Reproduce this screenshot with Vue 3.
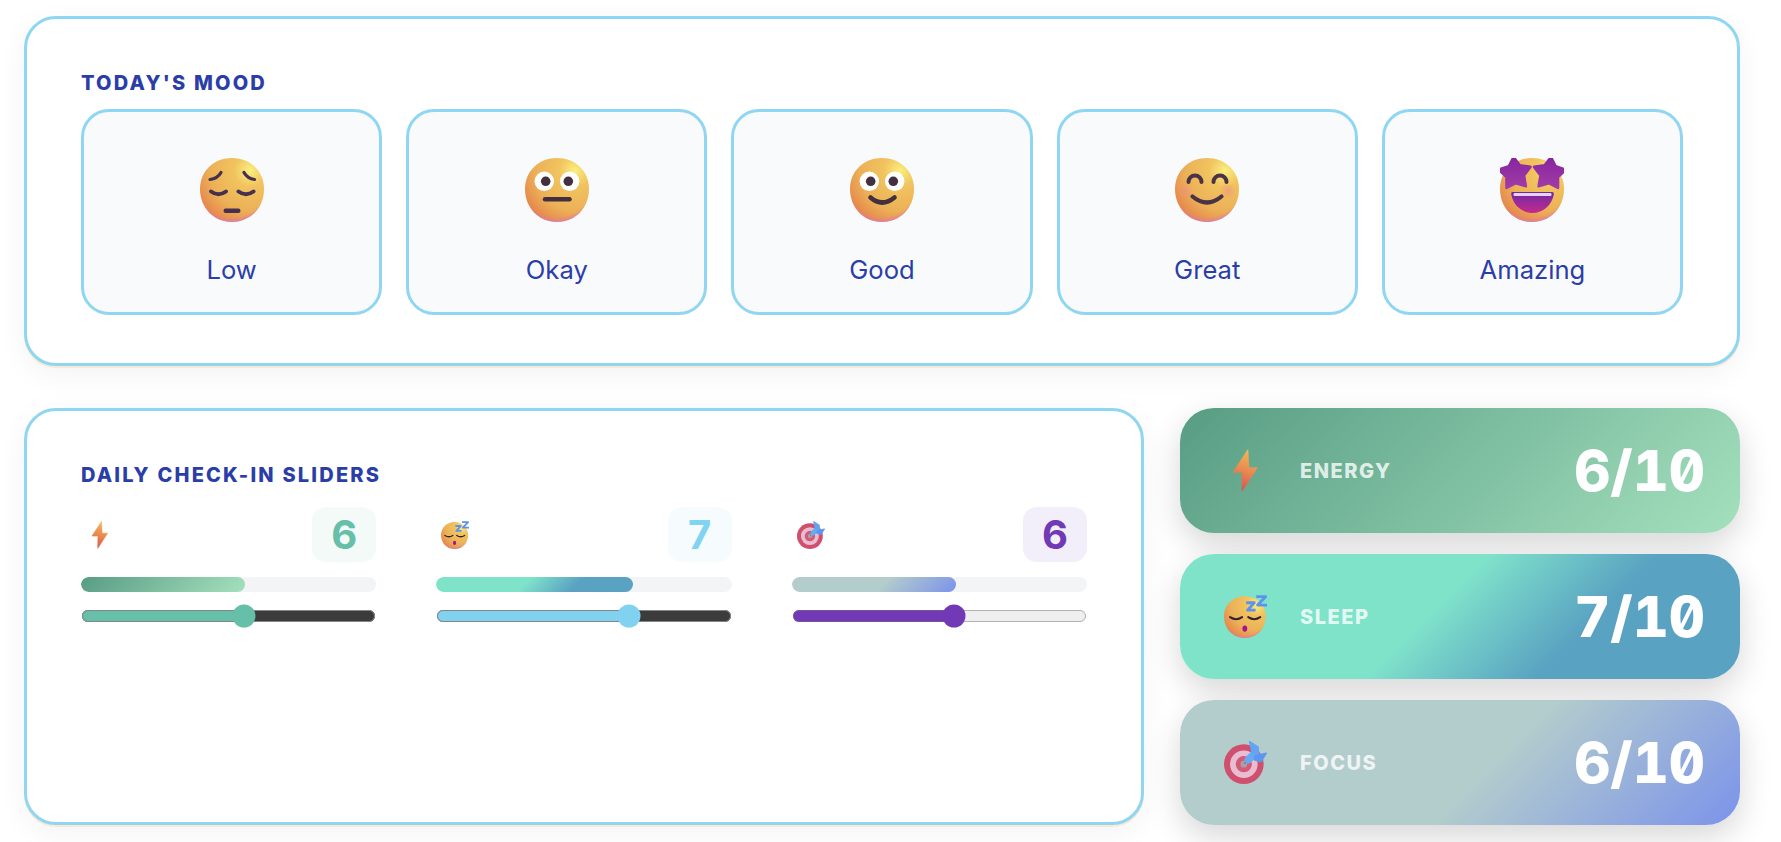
<script setup>
import { reactive } from 'vue'

const moods = [
  { label: 'Low', icon: '#e-low' },
  { label: 'Okay', icon: '#e-okay' },
  { label: 'Good', icon: '#e-good' },
  { label: 'Great', icon: '#e-great' },
  { label: 'Amazing', icon: '#e-amazing' }
]

const metrics = reactive([
  { key: 'energy', label: 'ENERGY', icon: '#e-bolt', value: 6 },
  { key: 'sleep', label: 'SLEEP', icon: '#e-sleep', value: 7 },
  { key: 'focus', label: 'FOCUS', icon: '#e-target', value: 6 }
])

const pct = (v) => ((v - 1) / 9) * 100 + '%'
</script>

<template>
  <main class="page">
    <svg class="defs" aria-hidden="true">
      <defs>
        <radialGradient id="g-face" cx="0.78" cy="0.2" r="0.95">
          <stop offset="0" stop-color="#f9ef7f" />
          <stop offset="0.26" stop-color="#f1c45f" />
          <stop offset="0.66" stop-color="#ecb057" />
          <stop offset="1" stop-color="#e47f4a" />
        </radialGradient>
        <radialGradient id="g-chin" cx="0.5" cy="0.36" r="0.66">
          <stop offset="0.86" stop-color="#dc7ab8" stop-opacity="0" />
          <stop offset="1" stop-color="#dc7ab8" />
        </radialGradient>
        <radialGradient id="g-cheek">
          <stop offset="0" stop-color="#f08a88" stop-opacity=".55" />
          <stop offset="1" stop-color="#f08a88" stop-opacity="0" />
        </radialGradient>
        <linearGradient id="g-bolt" x1="0.6" y1="0" x2="0.4" y2="1">
          <stop offset="0" stop-color="#f0b95a" />
          <stop offset="0.5" stop-color="#ea8a50" />
          <stop offset="1" stop-color="#d9534f" />
        </linearGradient>
        <linearGradient id="g-star" x1="0" y1="0" x2="0" y2="1">
          <stop offset="0" stop-color="#85259f" />
          <stop offset="1" stop-color="#a13ba6" />
        </linearGradient>
        <linearGradient id="g-mouth" x1="0" y1="0" x2="0" y2="1">
          <stop offset="0" stop-color="#6f2aa4" />
          <stop offset="1" stop-color="#c42a8e" />
        </linearGradient>
        <path id="e-head" d="M32 0C50 0 64 13 64 31C64 50 50 64 32 64C14 64 0 50 0 31C0 13 14 0 32 0Z" />
        <polygon id="e-star" points="0,-15 5,-7 14.5,-4.8 8,2.6 8.8,12.4 0,8.800 -8.8,12.4 -8,2.6 -14.5,-4.8 -5,-7" />

        <symbol id="e-low" viewBox="0 0 64 64">
          <use href="#e-head" fill="url(#g-face)" /><use href="#e-head" fill="url(#g-chin)" />
          <g fill="none" stroke="#47304f" stroke-linecap="round">
            <path d="M10 21.5C15 21 19 18 21 14.5" stroke-width="3.200" />
            <path d="M44 14.5C46 18 50 21 54.500 21.500" stroke-width="3.200" />
            <path d="M11 33.500Q18.500 39 26 33.500" stroke-width="4" />
            <path d="M38.500 33.500Q46 39 53.500 33.500" stroke-width="4" />
          </g>
          <rect x="23.500" y="50.500" width="17" height="4.500" rx="2.200" fill="#47304f" />
        </symbol>

        <symbol id="e-okay" viewBox="0 0 64 64">
          <use href="#e-head" fill="url(#g-face)" /><use href="#e-head" fill="url(#g-chin)" />
          <circle cx="19.300" cy="23.300" r="9.700" fill="#fff" /><circle cx="44.700" cy="23.300" r="9.700" fill="#fff" />
          <circle cx="20.700" cy="23.300" r="4.800" fill="#43303f" /><circle cx="43.300" cy="23.300" r="4.800" fill="#43303f" />
          <path d="M20 41.300H44.500" stroke="#43303f" stroke-width="4.400" stroke-linecap="round" />
        </symbol>

        <symbol id="e-good" viewBox="0 0 64 64">
          <use href="#e-head" fill="url(#g-face)" /><use href="#e-head" fill="url(#g-chin)" />
          <circle cx="19.300" cy="23.300" r="9.700" fill="#fff" /><circle cx="44.700" cy="23.300" r="9.700" fill="#fff" />
          <circle cx="20.700" cy="23.300" r="4.800" fill="#43303f" /><circle cx="43.300" cy="23.300" r="4.800" fill="#43303f" />
          <path d="M20.500 39.500Q32 49.500 44.500 39.500" fill="none" stroke="#43303f" stroke-width="4.600" stroke-linecap="round" />
        </symbol>

        <symbol id="e-great" viewBox="0 0 64 64">
          <use href="#e-head" fill="url(#g-face)" /><use href="#e-head" fill="url(#g-chin)" />
          <circle cx="10.500" cy="33" r="8.500" fill="url(#g-cheek)" /><circle cx="53" cy="33" r="8.500" fill="url(#g-cheek)" />
          <g fill="none" stroke="#4b3347" stroke-width="4" stroke-linecap="round">
            <path d="M13.500 24A6.500 6.500 0 0 1 26.500 24" /><path d="M38.500 24A6.500 6.500 0 0 1 51.500 24" />
            <path d="M17.500 38.500Q32 50.500 46.500 38.500" stroke-width="4.200" />
          </g>
        </symbol>

        <symbol id="e-amazing" viewBox="0 0 64 64">
          <use href="#e-head" fill="url(#g-face)" /><use href="#e-head" fill="url(#g-chin)" />
          <path d="M12.500 34H52C53.500 34 54 35 53.800 36.500C52 47 43 55 32.500 55C22 55 13 47 11.300 36.500C11 35 11.500 34 12.500 34Z" fill="url(#g-mouth)" />
          <rect x="13.500" y="35" width="38" height="3" rx="1" fill="#e6d4f2" />
          <g fill="url(#g-star)" stroke="url(#g-star)" stroke-width="2.400" stroke-linejoin="round">
            <use href="#e-star" transform="translate(15 15.500) rotate(-5) scale(1.1)" />
            <use href="#e-star" transform="translate(49.500 15.500) rotate(5) scale(1.1)" />
          </g>
        </symbol>

        <symbol id="e-bolt" viewBox="0 0 64 64">
          <path d="M35.500 1L13.500 34.500H27V62.500L49.500 28H37Z" fill="url(#g-bolt)" stroke="url(#g-bolt)" stroke-width="1.200" stroke-linejoin="round" />
        </symbol>

        <symbol id="e-sleep" viewBox="0 0 64 64">
          <g transform="translate(0 2) scale(0.97 0.97)">
            <use href="#e-head" fill="url(#g-face)" /><use href="#e-head" fill="url(#g-chin)" />
          </g>
          <g fill="none" stroke="#2e2430" stroke-width="3" stroke-linecap="round">
            <path d="M9 33Q18 39 27 33" /><path d="M36 33Q45 39 54 33" />
          </g>
          <ellipse cx="31" cy="50" rx="3.600" ry="4.600" fill="#a3148e" />
          <g fill="none" stroke="#5f92ee" stroke-width="4.200" stroke-linejoin="round">
            <path d="M48 2.500H62L50 15H64" /><path d="M33 11.500H45L35 22.500H47" />
          </g>
        </symbol>

        <symbol id="e-target" viewBox="0 0 64 64">
          <circle cx="29.500" cy="34.500" r="29.500" fill="#cf4f6d" />
          <circle cx="29.500" cy="34.500" r="20.500" fill="#e8bdd2" />
          <circle cx="29.500" cy="34.500" r="12" fill="#d45a78" />
          <circle cx="29.500" cy="34.500" r="5" fill="#a9a0a4" />
          <path d="M30 34L38 26" stroke="#7d7a84" stroke-width="2.200" />
          <path d="M36 28L47 17" stroke="#66aaf4" stroke-width="11" stroke-linecap="round" />
          <path d="M42 18L38 1L51 9L51 18Z" fill="#62a4f2" stroke="#62a4f2" stroke-width="2" stroke-linejoin="round" />
          <path d="M46 22L63 18L55 31L45 28Z" fill="#5a98f0" stroke="#5a98f0" stroke-width="2" stroke-linejoin="round" />
        </symbol>
      </defs>
    </svg>

    <section class="card mood-card">
      <h2 class="title">TODAY'S MOOD</h2>
      <div class="moods">
        <button v-for="m in moods" :key="m.label" class="mood" type="button">
          <svg class="mood-icon"><use :href="m.icon" /></svg>
          <span class="mood-label">{{ m.label }}</span>
        </button>
      </div>
    </section>

    <div class="lower">
      <section class="card slider-card">
        <h2 class="title">DAILY CHECK-IN SLIDERS</h2>
        <div class="sliders">
          <div v-for="m in metrics" :key="m.key" class="slider" :class="m.key">
            <div class="slider-head">
              <svg class="slider-icon"><use :href="m.icon" /></svg>
              <span class="slider-value">{{ m.value }}</span>
            </div>
            <div class="bar"><div class="bar-fill" :style="{ width: pct(m.value) }"></div></div>
            <input v-model.number="m.value" class="range" type="range" min="1" max="10" :aria-label="m.label" />
          </div>
        </div>
      </section>

      <div class="stats">
        <div v-for="m in metrics" :key="m.key" class="stat" :class="m.key">
          <svg class="stat-icon"><use :href="m.icon" /></svg>
          <span class="stat-label">{{ m.label }}</span>
          <span class="stat-value">{{ m.value }}/10</span>
        </div>
      </div>
    </div>
  </main>
</template>

<style>
html, body { background: #fff; }
</style>

<style scoped>
.page {
  box-sizing: border-box;
  width: 1781px;
  height: 842px;
  overflow: hidden;
  padding: 16px 41px 0 24px;
  font-family: Inter, "Liberation Sans", sans-serif;
  color: #2b3ea8;
}
.defs { display: block; width: 0; height: 0; }

.card {
  box-sizing: border-box;
  background: #fff;
  border: 3px solid #8fd6f2;
  border-radius: 32px;
  padding: 52px 54px;
  box-shadow: 0 2px 0 #f6ead6, 0 8px 30px rgba(0, 0, 0, 0.05);
}
.mood-card { height: 350px; }

.title {
  margin: 0;
  font-size: 20px;
  line-height: 24px;
  font-weight: 800;
  letter-spacing: 2.2px;
  color: #2b3ea8;
}
.mood-card .title { margin-bottom: 14px; }

.moods {
  display: grid;
  grid-template-columns: repeat(5, 1fr);
  gap: 24px;
}
.mood {
  box-sizing: border-box;
  height: 206px;
  display: flex;
  flex-direction: column;
  align-items: center;
  padding: 46px 0 0;
  background: #f9fafc;
  border: 3px solid #8fd6f2;
  border-radius: 28px;
  font: inherit;
  color: inherit;
}
.mood-icon { width: 64px; height: 64px; display: block; }
.mood-label { margin-top: 32px; font-size: 25.6px; line-height: 32px; font-weight: 400; color: #2b3ea8; }

.lower {
  display: grid;
  grid-template-columns: 2fr 1fr;
  column-gap: 36px;
  margin-top: 42px;
  height: 417px;
}
.slider-card { height: 417px; }
.slider-card .title { margin-bottom: 20px; }

.sliders {
  display: grid;
  grid-template-columns: repeat(3, 1fr);
  gap: 60px;
}
.slider-head {
  display: flex;
  align-items: center;
  justify-content: space-between;
  height: 55px;
}
.slider-icon { width: 28px; height: 28px; margin-left: 5px; display: block; }
.slider-value {
  box-sizing: border-box;
  width: 64px;
  height: 55px;
  border-radius: 14px;
  display: flex;
  align-items: center;
  justify-content: center;
  font-family: Inter, "DejaVu Sans Mono", monospace;
  font-feature-settings: "zero";
  font-weight: 700;
  font-size: 40px;
  line-height: 1;
}
.bar {
  height: 15px;
  margin-top: 15px;
  border-radius: 8px;
  background: #f3f4f6;
  overflow: hidden;
}
.bar-fill { height: 100%; border-radius: 8px; }
.range {
  display: block;
  width: 100%;
  margin: 8px 0 0;
  zoom: 1.5;
}

.energy .slider-value { color: #66bfa9; background: #f4faf8; }
.sleep .slider-value { color: #80d4f2; background: #f6fbfe; }
.focus .slider-value { color: #7239b6; background: #f2eefa; }
.energy .range { accent-color: #66bfa9; }
.sleep .range { accent-color: #80d2f0; }
.focus .range { accent-color: #7239b6; }

.energy .bar-fill, .stat.energy { background: linear-gradient(135deg, #579c84, #a4e0bd); }
.sleep .bar-fill, .stat.sleep { background: linear-gradient(135deg, #7fe3ca 45%, #5aa2c2 70%); }
.focus .bar-fill, .stat.focus { background: linear-gradient(135deg, #b3cccc 55%, #7b93ea 100%); }

.stats {
  display: flex;
  flex-direction: column;
  justify-content: space-between;
}
.stat {
  box-sizing: border-box;
  height: 125px;
  display: flex;
  align-items: center;
  padding: 0 35px 0 44px;
  border-radius: 34px;
  box-shadow: 0 12px 32px rgba(0, 0, 0, 0.16);
}
.stat-icon { width: 43px; height: 43px; display: block; flex: none; }
.stat-label {
  margin-left: 33px;
  font-size: 20px;
  font-weight: 800;
  letter-spacing: 1.5px;
  color: rgba(255, 255, 255, 0.8);
}
.stat-value {
  margin-left: auto;
  font-family: Inter, "DejaVu Sans Mono", monospace;
  font-feature-settings: "tnum", "zero";
  font-weight: 800;
  font-size: 56px;
  line-height: 1;
  color: #fff;
}
</style>
